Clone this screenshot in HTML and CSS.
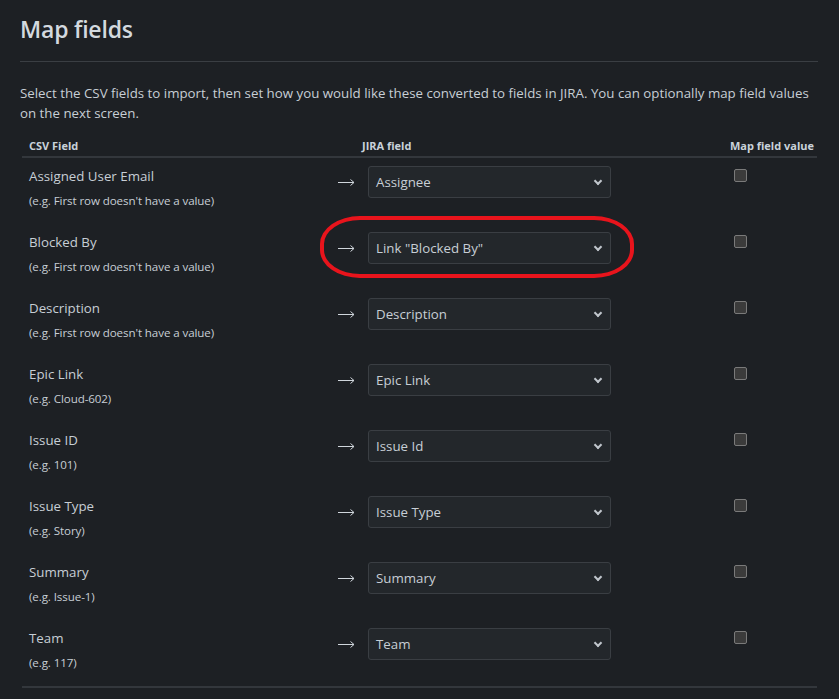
FILE: index.html
```html
<!DOCTYPE html>
<html lang="en">
<head>
<meta charset="utf-8">
<title>Map fields</title>
<link rel="stylesheet" href="styles.css">
</head>
<body>
<div class="page">
  <h1 class="title">Map fields</h1>
  <p class="intro">Select the CSV fields to import, then set how you would like these converted to fields in JIRA. You can optionally map field values on the next screen.</p>
  <div class="table">
    <div class="row head">
      <div class="h-csv">CSV Field</div>
      <div></div>
      <div class="h-jira">JIRA field</div>
      <div class="h-map">Map field value</div>
    </div>

    <div class="row">
      <div class="c-csv"><div class="name">Assigned User Email</div><div class="eg">(e.g. First row doesn't have a value)</div></div>
      <div class="c-arrow"><svg class="arrow" viewBox="0 0 17 9" width="17" height="9"><path d="M0 4.5H16M12.5 1.5L16 4.5L12.5 7.5" fill="none" stroke="currentColor" stroke-width="1"/></svg></div>
      <div class="c-jira"><div class="select">Assignee<span class="chev"></span></div></div>
      <div class="c-map"><span class="check"></span></div>
    </div>

    <div class="row">
      <div class="c-csv"><div class="name">Blocked By</div><div class="eg">(e.g. First row doesn't have a value)</div></div>
      <div class="c-arrow"><svg class="arrow" viewBox="0 0 17 9" width="17" height="9"><path d="M0 4.5H16M12.5 1.5L16 4.5L12.5 7.5" fill="none" stroke="currentColor" stroke-width="1"/></svg></div>
      <div class="c-jira"><div class="select">Link "Blocked By"<span class="chev"></span></div><span class="ring"></span></div>
      <div class="c-map"><span class="check"></span></div>
    </div>

    <div class="row">
      <div class="c-csv"><div class="name">Description</div><div class="eg">(e.g. First row doesn't have a value)</div></div>
      <div class="c-arrow"><svg class="arrow" viewBox="0 0 17 9" width="17" height="9"><path d="M0 4.5H16M12.5 1.5L16 4.5L12.5 7.5" fill="none" stroke="currentColor" stroke-width="1"/></svg></div>
      <div class="c-jira"><div class="select">Description<span class="chev"></span></div></div>
      <div class="c-map"><span class="check"></span></div>
    </div>

    <div class="row">
      <div class="c-csv"><div class="name">Epic Link</div><div class="eg">(e.g. Cloud-602)</div></div>
      <div class="c-arrow"><svg class="arrow" viewBox="0 0 17 9" width="17" height="9"><path d="M0 4.5H16M12.5 1.5L16 4.5L12.5 7.5" fill="none" stroke="currentColor" stroke-width="1"/></svg></div>
      <div class="c-jira"><div class="select">Epic Link<span class="chev"></span></div></div>
      <div class="c-map"><span class="check"></span></div>
    </div>

    <div class="row">
      <div class="c-csv"><div class="name">Issue ID</div><div class="eg">(e.g. 101)</div></div>
      <div class="c-arrow"><svg class="arrow" viewBox="0 0 17 9" width="17" height="9"><path d="M0 4.5H16M12.5 1.5L16 4.5L12.5 7.5" fill="none" stroke="currentColor" stroke-width="1"/></svg></div>
      <div class="c-jira"><div class="select">Issue Id<span class="chev"></span></div></div>
      <div class="c-map"><span class="check"></span></div>
    </div>

    <div class="row">
      <div class="c-csv"><div class="name">Issue Type</div><div class="eg">(e.g. Story)</div></div>
      <div class="c-arrow"><svg class="arrow" viewBox="0 0 17 9" width="17" height="9"><path d="M0 4.5H16M12.5 1.5L16 4.5L12.5 7.5" fill="none" stroke="currentColor" stroke-width="1"/></svg></div>
      <div class="c-jira"><div class="select">Issue Type<span class="chev"></span></div></div>
      <div class="c-map"><span class="check"></span></div>
    </div>

    <div class="row">
      <div class="c-csv"><div class="name">Summary</div><div class="eg">(e.g. Issue-1)</div></div>
      <div class="c-arrow"><svg class="arrow" viewBox="0 0 17 9" width="17" height="9"><path d="M0 4.5H16M12.5 1.5L16 4.5L12.5 7.5" fill="none" stroke="currentColor" stroke-width="1"/></svg></div>
      <div class="c-jira"><div class="select">Summary<span class="chev"></span></div></div>
      <div class="c-map"><span class="check"></span></div>
    </div>

    <div class="row">
      <div class="c-csv"><div class="name">Team</div><div class="eg">(e.g. 117)</div></div>
      <div class="c-arrow"><svg class="arrow" viewBox="0 0 17 9" width="17" height="9"><path d="M0 4.5H16M12.5 1.5L16 4.5L12.5 7.5" fill="none" stroke="currentColor" stroke-width="1"/></svg></div>
      <div class="c-jira"><div class="select">Team<span class="chev"></span></div></div>
      <div class="c-map"><span class="check"></span></div>
    </div>
  </div>
</div>
</body>
</html>
```

FILE: styles.css
```css
html, body {
  margin: 0;
  padding: 0;
  background: #1d2024;
}
body {
  font-family: "Open Sans", "Noto Sans", "Liberation Sans", sans-serif;
  color: #c7ced5;
}
.page {
  padding: 14px 21px 0 20px;
}
.title {
  margin: 0;
  font-size: 23px;
  line-height: 30px;
  font-weight: 600;
  color: #d3d9df;
  padding-bottom: 17px;
  border-bottom: 1px solid #3a3e43;
  letter-spacing: -0.2px;
}
.intro {
  margin: 21px 0 0 0;
  font-size: 13.3px;
  line-height: 20px;
  letter-spacing: 0;
}
.table {
  margin: 10px 1px 0 2px;
  border-bottom: 2px solid #33373c;
}
.row {
  display: grid;
  grid-template-columns: 308px 32px 361px 1fr;
  height: 66px;
}
.row.head {
  height: 23px;
  border-bottom: 2px solid #33373c;
  font-size: 11px;
  font-weight: 700;
  line-height: 20px;
  color: #c9d2da;
  align-items: end;
}
.h-csv { padding-left: 7px; }
.h-map { text-align: right; padding-right: 3px; }
.c-csv {
  padding-left: 7px;
  padding-top: 8px;
}
.name {
  font-size: 13.3px;
  line-height: 20px;
}
.eg {
  font-size: 11.6px;
  line-height: 20px;
  margin-top: 5px;
  letter-spacing: -0.1px;
}
.c-arrow {
  padding-top: 8px;
  height: 32px;
  display: flex;
  align-items: center;
  justify-content: center;
  color: #d0d6dc;
  padding-left: 1px;
}
.arrow {
  display: block;
}
.c-jira {
  position: relative;
  padding-top: 8px;
  padding-left: 6px;
}
.select {
  position: relative;
  box-sizing: border-box;
  width: 243px;
  height: 32px;
  border: 1px solid #3a3e43;
  border-radius: 3px;
  background: #23272b;
  padding-left: 7px;
  font-size: 13.3px;
  line-height: 30px;
  color: #c7ced5;
}
.chev {
  position: absolute;
  right: 9px;
  top: 11px;
  width: 4px;
  height: 4px;
  border-right: 2px solid #c0c6cc;
  border-bottom: 2px solid #c0c6cc;
  transform: rotate(45deg);
}
.ring {
  position: absolute;
  left: -42px;
  top: -8px;
  width: 306px;
  height: 54px;
  border: 4px solid #e8141c;
  border-radius: 40px / 28px;
}
.c-map {
  padding-top: 11px;
  padding-left: 11px;
}
.check {
  display: block;
  box-sizing: border-box;
  width: 13px;
  height: 13px;
  border: 1px solid #7a7a7a;
  border-radius: 2px;
  background: #3b3b3b;
}
```
